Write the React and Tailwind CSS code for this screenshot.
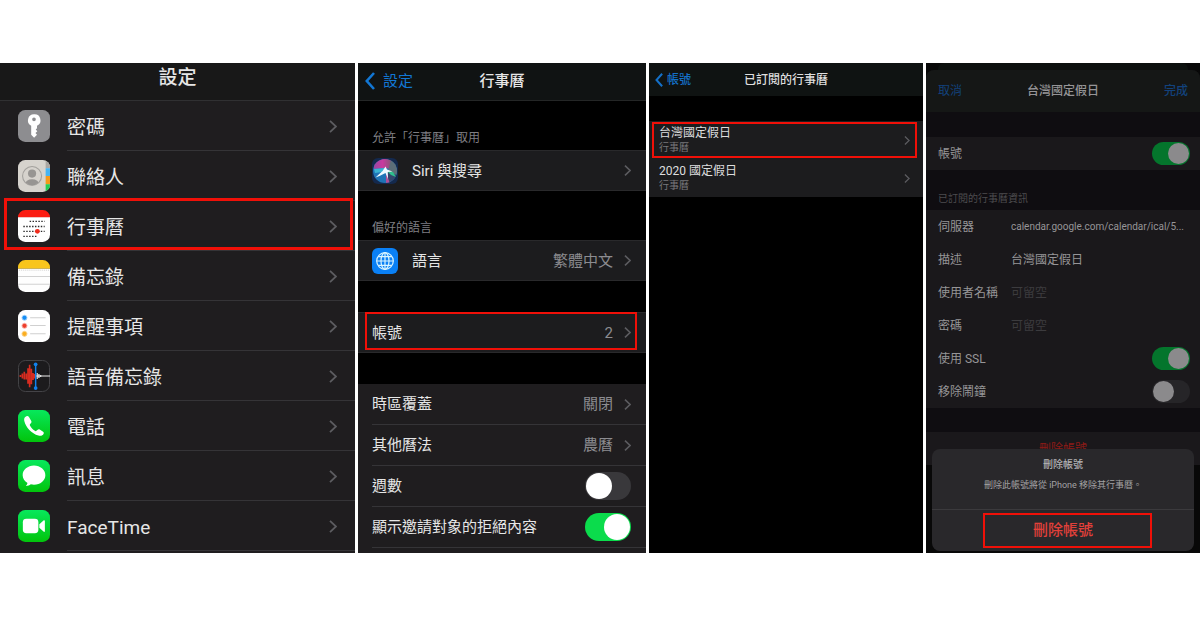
import React from "react";

function Chevron({ className = "h-[13px] w-2" }) {
  return (
    <svg viewBox="0 0 8 13" className={`shrink-0 text-[#5c5c60] ${className}`} fill="none" stroke="currentColor" strokeWidth="1.8" aria-hidden="true">
      <path d="M1 0.8 L7 6.5 L1 12.2" />
    </svg>
  );
}

function BackChevron({ className }) {
  return (
    <svg viewBox="0 0 10 18" className={`shrink-0 ${className}`} fill="none" stroke="currentColor" strokeWidth="2.6" aria-hidden="true">
      <path d="M9 1 L1.8 9 L9 17" />
    </svg>
  );
}

function Highlight({ className }) {
  return <span aria-hidden="true" className={`pointer-events-none absolute border-[#f01008] ${className}`} />;
}

function Icon({ children }) {
  return (
    <svg viewBox="0 0 33 33" className="size-8 shrink-0" aria-hidden="true">
      {children}
    </svg>
  );
}

function GreenTile({ id }) {
  return (
    <>
      <defs>
        <linearGradient id={id} x1="0" y1="0" x2="0" y2="1">
          <stop offset="0" stopColor="#07e85c" />
          <stop offset="1" stopColor="#02c40c" />
        </linearGradient>
      </defs>
      <rect width="33" height="33" rx="7.5" fill={`url(#${id})`} />
    </>
  );
}

const KeyIcon = () => (
  <Icon>
    <rect width="33" height="33" rx="7.5" fill="#8d8d90" />
    <path fill="#fff" fillRule="evenodd" d="M16.5 4.5a6.2 6.2 0 0 0-2.9 11.7v9.3l3 3 3-3-1.6-1.8 1.9-1.9-1.6-1.8 1.3-1.3v-2.4A6.2 6.2 0 0 0 16.5 4.5Zm0 3.2a1.9 1.9 0 1 1 0 3.8 1.9 1.9 0 0 1 0-3.8Z" />
  </Icon>
);

const ContactsIcon = () => (
  <Icon>
    <defs>
      <clipPath id="contacts-tile"><rect width="33" height="33" rx="7.5" /></clipPath>
      <clipPath id="contacts-face"><circle cx="14.5" cy="16.5" r="9.4" /></clipPath>
    </defs>
    <g clipPath="url(#contacts-tile)">
      <rect width="33" height="33" fill="#d6d3cd" />
      <rect x="28.5" width="4.5" height="8.5" fill="#a9a7a3" />
      <rect x="28.5" y="8.5" width="4.5" height="8" fill="#46b4f2" />
      <rect x="28.5" y="16.5" width="4.5" height="8.5" fill="#f59a1b" />
      <rect x="28.5" y="25" width="4.5" height="8" fill="#25cf55" />
    </g>
    <circle cx="14.5" cy="16.5" r="9.8" fill="none" stroke="#a3a19d" strokeWidth="1.1" />
    <g clipPath="url(#contacts-face)" fill="#979592">
      <circle cx="14.5" cy="14" r="4.2" />
      <ellipse cx="14.5" cy="25" rx="7.4" ry="5.2" />
    </g>
  </Icon>
);

const CalendarIcon = () => (
  <Icon>
    <path d="M0 7.5A7.5 7.5 0 0 1 7.5 0h18A7.5 7.5 0 0 1 33 7.5V8H0Z" fill="#fb1d12" />
    <path d="M0 7.5h33v18a7.5 7.5 0 0 1-7.5 7.5h-18A7.5 7.5 0 0 1 0 25.5Z" fill="#fff" />
    <g stroke="#2a2a2a" strokeWidth="1.4" strokeDasharray="1.5 1.5">
      <path d="M12 11.7H27.5M5.500 17H27.5M5.500 22H27.5M5.500 27.2H20.5" />
    </g>
    <circle cx="20" cy="22" r="2.5" fill="#f02c1c" />
  </Icon>
);

const NotesIcon = () => (
  <Icon>
    <path d="M0 9V7.5A7.5 7.5 0 0 1 7.5 0h18A7.5 7.5 0 0 1 33 7.5V9Z" fill="#f8c51c" />
    <path d="M0 9h33v16.5a7.5 7.5 0 0 1-7.5 7.5h-18A7.5 7.5 0 0 1 0 25.5Z" fill="#fefefe" />
    <path d="M1 10.5H32" stroke="#c4c4c4" strokeDasharray="1 1" strokeWidth="0.8" />
    <path d="M0 17H33M0 25H33" stroke="#cfcfcf" strokeWidth="1" />
  </Icon>
);

const RemindersIcon = () => (
  <Icon>
    <rect width="33" height="33" rx="7.5" fill="#fff" />
    <path d="M12.5 8H28.5M12.5 16H28.5M12.5 24.5H28.5" stroke="#d0d0d0" strokeWidth="1.2" />
    <g strokeWidth="1">
      <circle cx="6.7" cy="8" r="2.6" fill="#168df4" stroke="#a5d4fb" />
      <circle cx="6.7" cy="16.3" r="2.6" fill="#ed3e2c" stroke="#f8b5ad" />
      <circle cx="6.7" cy="24.6" r="2.6" fill="#fbae20" stroke="#fbd48c" />
    </g>
  </Icon>
);

const VoiceIcon = () => (
  <Icon>
    <rect x="0.5" y="0.5" width="32" height="32" rx="7.2" fill="#1c1b1d" stroke="#454548" />
    <path stroke="#d92c20" strokeWidth="1.7" d="M2.5 15.5v2M4.500 14v5M6.500 12v8M8.500 14v6M10.300 8.500v16M12 5v23M13.800 9v16M15.500 13.500v7M17 14.500v4.500" />
    <path stroke="#eee" strokeWidth="1.2" d="M19.8 13.5v6M21.600 14.500v4M23.400 15.400v2.200M18.500 16.500H33" />
    <path stroke="#1182ee" strokeWidth="1.5" d="M18.2 4.5V29" />
    <circle cx="18.2" cy="4.5" r="1.9" fill="#1182ee" />
    <circle cx="18.2" cy="29" r="1.9" fill="#1182ee" />
  </Icon>
);

const PhoneIcon = () => (
  <Icon>
    <GreenTile id="phone-tile" />
    <path fill="#fff" d="M8.700 6.400C6.600 7.200 6 9 6.500 11.300c1.700 6.800 7.400 12.800 14.600 15.100 2.400.7 4.400.1 5.300-1.900.4-.9.200-1.600-.5-2.100l-3.500-2.300c-.8-.5-1.500-.4-2.100.2l-1.300 1.200c-.5.4-1 .4-1.600 0-2.200-1.500-3.900-3.400-5.100-5.500-.3-.6-.2-1.100.2-1.500l1-1.200c.5-.6.6-1.200.2-1.900L11.300 7.200c-.6-1-1.600-1.200-2.600-.8Z" />
  </Icon>
);

const MessagesIcon = () => (
  <Icon>
    <GreenTile id="messages-tile" />
    <path fill="#fff" d="M16.500 5.800C10 5.800 4.800 10.200 4.800 15.600c0 3.400 2 6.300 5 8.100-.2 1.200-.8 2.200-1.700 3.100 2 0 3.800-.7 5.100-1.800 1.100.3 2.200.4 3.300.4 6.500 0 11.700-4.400 11.700-9.800S23 5.800 16.500 5.800Z" />
  </Icon>
);

const FaceTimeIcon = () => (
  <Icon>
    <GreenTile id="facetime-tile" />
    <rect x="5" y="9" width="16" height="15" rx="3.6" fill="#fff" />
    <path fill="#fff" d="M22 14.800l4.300-4c.7-.6 1.400-.3 1.400.6v10.300c0 .9-.7 1.200-1.400.6l-4.300-4Z" />
  </Icon>
);

const SiriIcon = () => (
  <svg viewBox="0 0 26 26" className="size-[26px] shrink-0" aria-hidden="true">
    <defs>
      <linearGradient id="siri-top" x1="0" y1="0" x2="1" y2="0">
        <stop offset="0" stopColor="#8a4aa6" />
        <stop offset="0.5" stopColor="#c93a9e" />
        <stop offset="1" stopColor="#7a5a70" />
      </linearGradient>
      <clipPath id="siri-orb"><circle cx="13" cy="13" r="12" /></clipPath>
    </defs>
    <rect width="26" height="26" rx="6" fill="#14294d" />
    <g clipPath="url(#siri-orb)">
      <rect width="26" height="26" fill="#1f74b6" />
      <path d="M0 0H21L19 11 13 10 2 11Z" fill="url(#siri-top)" />
      <path d="M19 2L26 6V18L16 13Z" fill="#5c6e78" />
      <path d="M14 13L25 17 22 24 17 26Z" fill="#34466c" />
      <path d="M15 13L21 14 24 19 19 17Z" fill="#2fbf8d" />
      <path d="M14 14L14 26H18Z" fill="#b04f98" />
      <path d="M2 11L13 10 10 14 3 15Z" fill="#3ab4d2" />
    </g>
    <path fill="#eefaff" d="M13.500 8.500L15 11.500 20.500 13.500 15.800 14 16 21 13.500 15 7.500 18 3.500 19.500 10.500 13Z" />
  </svg>
);

const LanguageIcon = () => (
  <svg viewBox="0 0 26 26" className="size-[26px] shrink-0" fill="none" stroke="#d9f4ff" strokeWidth="1.2" aria-hidden="true">
    <rect width="26" height="26" rx="6" fill="#0a80f5" stroke="none" />
    <circle cx="13" cy="13" r="8.3" />
    <ellipse cx="13" cy="13" rx="4" ry="8.3" />
    <path d="M13 4.700V21.300M4.700 13H21.300M6.200 8.700H19.800M6.200 17.300H19.800" />
  </svg>
);

const apps = [
  { name: "密碼", Icon: KeyIcon },
  { name: "聯絡人", Icon: ContactsIcon },
  { name: "行事曆", Icon: CalendarIcon, marked: true },
  { name: "備忘錄", Icon: NotesIcon },
  { name: "提醒事項", Icon: RemindersIcon },
  { name: "語音備忘錄", Icon: VoiceIcon },
  { name: "電話", Icon: PhoneIcon },
  { name: "訊息", Icon: MessagesIcon },
  { name: "FaceTime", Icon: FaceTimeIcon },
];

function SettingsScreen() {
  return (
    <section className="min-w-0 bg-[#1f1d1f] pb-0.5 text-[#e6e6e6]">
      <header className="flex h-[38px] justify-center border-b border-[#303032] bg-[#181818]">
        <h1 className="text-[19px] leading-[30px] font-medium">設定</h1>
      </header>
      <ul>
        {apps.map(({ name, Icon: AppIcon, marked }) => (
          <li key={name} className="relative">
            <a href="#" className="flex h-[50px] items-center pl-[18px]">
              <AppIcon />
              <span className="ml-[17px] flex h-full min-w-0 flex-1 items-center justify-between border-b border-[#353437] pt-0.5 pr-[18px]">
                <span className="pt-0.5 text-[19px] leading-7">{name}</span>
                <Chevron />
              </span>
            </a>
            {marked && <Highlight className="-top-[3px] right-0.5 bottom-px left-1 border-3" />}
          </li>
        ))}
      </ul>
    </section>
  );
}

function Switch({ id, on, size = "large", dim = false }) {
  const box = size === "large"
    ? "h-7 w-[46px] before:size-[26px] checked:before:translate-x-[18px]"
    : "h-[23px] w-[38px] before:size-[21px] checked:before:translate-x-[15px]";
  const tone = dim
    ? "bg-[#262528] checked:bg-[#04752c] before:bg-[#8b8a8c]"
    : "bg-[#39383b] checked:bg-[#0bdc4c] before:bg-white";
  return (
    <input
      id={id}
      type="checkbox"
      role="switch"
      defaultChecked={on}
      className={`shrink-0 appearance-none rounded-full p-px before:block before:rounded-full ${box} ${tone}`}
    />
  );
}

function SectionLabel({ children }) {
  return <h2 className="flex h-[49px] items-end px-3.5 pb-[3px] text-xs leading-[18px] text-[#7e7e82]">{children}</h2>;
}

function CalendarRow({ icon, label, value }) {
  return (
    <a href="#" className="flex h-[41px] items-center border-y border-[#29292b] bg-[#1c1c1e] pr-[15px] pl-3.5">
      {icon && <span className="mr-3.5">{icon}</span>}
      <span className="flex-1">{label}</span>
      {value && <span className="mr-[11px] text-[#8c8c90]">{value}</span>}
      <Chevron className="h-[11px] w-[7px]" />
    </a>
  );
}

function CalendarScreen() {
  const inner = "flex h-[41px] items-center border-b border-[#353437] pr-[15px]";
  return (
    <section className="min-w-0 bg-black text-[15px] leading-6 text-[#e6e6e6]">
      <header className="grid h-[38px] grid-cols-[1fr_auto_1fr] items-center border-b border-[#242626] bg-[#101313] px-[7px] pb-0.5">
        <a href="#" className="flex items-center gap-2 text-[#1277d4]">
          <BackChevron className="h-[18px] w-2.5" />
          設定
        </a>
        <h1 className="font-medium">行事曆</h1>
      </header>
      <SectionLabel>允許「行事曆」取用</SectionLabel>
      <CalendarRow icon={<SiriIcon />} label="Siri 與搜尋" />
      <SectionLabel>偏好的語言</SectionLabel>
      <CalendarRow icon={<LanguageIcon />} label="語言" value="繁體中文" />
      <div className="relative my-[31px]">
        <CalendarRow label="帳號" value="2" />
        <Highlight className="top-0 right-[9px] bottom-[3px] left-[7px] border-2" />
      </div>
      <div className="bg-[#1f1d1f] pb-[5px] pl-3.5">
        <a href="#" className={inner}>
          <span className="flex-1">時區覆蓋</span>
          <span className="mr-[11px] text-[#8c8c90]">關閉</span>
          <Chevron className="h-[11px] w-[7px]" />
        </a>
        <a href="#" className={inner}>
          <span className="flex-1">其他曆法</span>
          <span className="mr-[11px] text-[#8c8c90]">農曆</span>
          <Chevron className="h-[11px] w-[7px]" />
        </a>
        <div className={inner}>
          <label htmlFor="week-numbers" className="flex-1">週數</label>
          <Switch id="week-numbers" />
        </div>
        <div className={inner}>
          <label htmlFor="declined" className="flex-1">顯示邀請對象的拒絕內容</label>
          <Switch id="declined" on />
        </div>
      </div>
    </section>
  );
}

function SubscribedRow({ title, marked }) {
  return (
    <a href="#" className="relative flex h-[38px] items-center justify-between bg-[#1c1c1e] pr-[13px] pl-2.5">
      <span>
        <span className="block leading-[15px]">{title}</span>
        <span className="block text-[10px] leading-[13px] text-[#78787b]">行事曆</span>
      </span>
      <Chevron className="h-[9px] w-[6px]" />
      {marked && <Highlight className="top-px right-1.5 bottom-px left-[3px] border-2" />}
    </a>
  );
}

function SubscribedScreen() {
  return (
    <section className="min-w-0 bg-black text-xs text-[#dedede]">
      <header className="grid h-[33px] grid-cols-[1fr_auto_1fr] items-center bg-[#0f1312] px-1.5">
        <a href="#" className="flex items-center gap-1 font-medium text-[#1470c8]">
          <BackChevron className="h-3.5 w-2" />
          帳號
        </a>
        <h1 className="font-medium">已訂閱的行事曆</h1>
      </header>
      <div className="mt-[25px]">
        <SubscribedRow title="台灣國定假日" marked />
        <SubscribedRow title="2020 國定假日" />
      </div>
    </section>
  );
}

function Field({ id, label, type = "text", value, placeholder, small }) {
  return (
    <div className="flex h-[33px] items-center">
      <label htmlFor={id} className="w-[73px] shrink-0">{label}</label>
      <input
        id={id}
        type={type}
        defaultValue={value}
        placeholder={placeholder}
        className={`min-w-0 flex-1 bg-transparent text-ellipsis outline-none placeholder:text-[#3c3b3e] ${small ? "text-[10px]" : ""}`}
      />
    </div>
  );
}

function SubscriptionScreen() {
  return (
    <section className="relative min-w-0 overflow-hidden bg-[#080808] pb-[88px] text-xs text-[#969597]">
      <div className="mx-3 h-[7px] rounded-t-md bg-[#0c100e]" />
      <div className="rounded-t-lg bg-[#0f0d11]">
        <header className="grid h-[42px] grid-cols-[1fr_auto_1fr] items-center rounded-t-lg bg-[#151716] px-3">
          <button type="button" className="justify-self-start text-[#12427c]">取消</button>
          <h1 className="font-medium">台灣國定假日</h1>
          <button type="button" className="justify-self-end font-medium text-[#12427c]">完成</button>
        </header>
        <div className="mt-[25px] flex h-[33px] items-center justify-between bg-[#1a181b] pr-2.5 pl-3">
          <label htmlFor="account">帳號</label>
          <Switch id="account" on size="small" dim />
        </div>
        <h2 className="flex h-10 items-end px-3 pb-[3px] text-[10px] leading-4 text-[#4d4c4f]">已訂閱的行事曆資訊</h2>
        <div className="bg-[#1a181b] pr-2.5 pl-3">
          <Field id="server" label="伺服器" value="calendar.google.com/calendar/ical/5..." small />
          <Field id="description" label="描述" value="台灣國定假日" />
          <Field id="username" label="使用者名稱" placeholder="可留空" />
          <Field id="password" label="密碼" type="password" placeholder="可留空" />
          <div className="flex h-[33px] items-center justify-between">
            <label htmlFor="ssl">使用 SSL</label>
            <Switch id="ssl" on size="small" dim />
          </div>
          <div className="flex h-[33px] items-center justify-between">
            <label htmlFor="alarms">移除鬧鐘</label>
            <Switch id="alarms" size="small" dim />
          </div>
        </div>
        <div className="mt-6 bg-[#1a181b]">
          <button type="button" className="block h-[33px] w-full text-[#8c1b17]">刪除帳號</button>
        </div>
      </div>
      <div role="dialog" aria-labelledby="sheet-title" className="absolute inset-x-1.5 bottom-0.5 rounded-lg bg-[#29282b] text-center">
        <h2 id="sheet-title" className="pt-[9px] text-[10px] leading-[14px] font-medium text-[#b4b3b5]">刪除帳號</h2>
        <p className="pt-1.5 pb-[17px] text-[9px] leading-[14px] text-[#a3a2a4]">刪除此帳號將從 iPhone 移除其行事曆。</p>
        <div className="relative border-t border-[#3b3a3d]">
          <button type="button" className="block h-[41px] w-full text-[15px] font-medium text-[#e2403a]">刪除帳號</button>
          <Highlight className="top-[3px] right-[42px] bottom-[3px] left-[51px] border-2" />
        </div>
      </div>
    </section>
  );
}

export default function App() {
  return (
    <main
      lang="zh-Hant"
      className="grid min-h-screen grid-cols-[355fr_288fr_274fr_274fr] content-start gap-[3px] bg-white pt-[63px] font-['Roboto','Noto_Sans_CJK_TC',sans-serif]"
    >
      <SettingsScreen />
      <CalendarScreen />
      <SubscribedScreen />
      <SubscriptionScreen />
    </main>
  );
}
